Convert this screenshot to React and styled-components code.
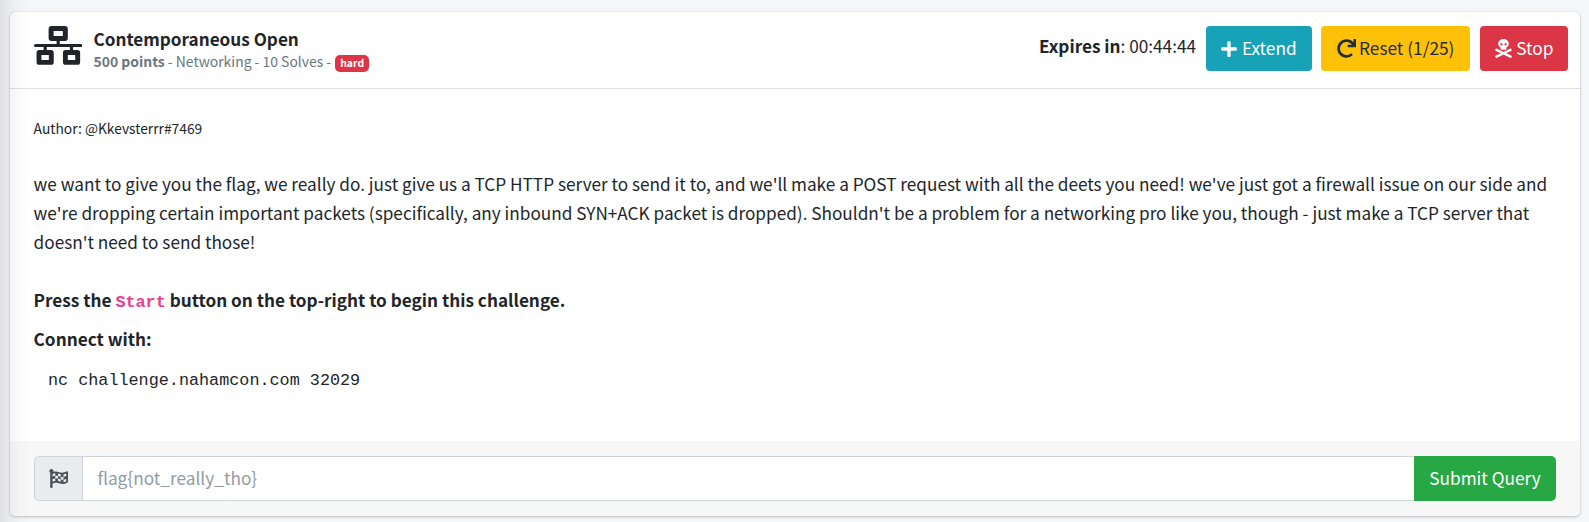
import React from "react";
import styled, { createGlobalStyle } from "styled-components";
import { FaPlus, FaRedo, FaSkullCrossbones, FaFlagCheckered } from "react-icons/fa";

const sans = `"Noto Sans CJK SC", "Noto Sans", sans-serif`;

const GlobalStyle = createGlobalStyle`
  *, *::before, *::after { box-sizing: border-box; }
  body {
    margin: 0;
    background: #f4f6f9;
    color: #212529;
    font: 400 17.2px/28.8px ${sans};
  }
`;

const Page = styled.main`
  position: relative;
  height: 522px;
  padding: 12px 9px 6px 10px;
  overflow: hidden;
`;

const SidebarShadow = styled.div`
  position: absolute;
  inset: 0 auto 0 0;
  width: 32px;
  pointer-events: none;
  background: linear-gradient(to right, rgba(0, 0, 0, 0.09), rgba(0, 0, 0, 0.045) 30%, rgba(0, 0, 0, 0.012) 65%, transparent);
`;

const Card = styled.section`
  display: flex;
  flex-direction: column;
  height: 504px;
  border-radius: 5px;
  background: #fff;
  box-shadow: 0 0 1px rgba(0, 0, 0, 0.25), 0 1px 3px rgba(0, 0, 0, 0.2);
  overflow: hidden;
`;

const Header = styled.header`
  display: flex;
  align-items: flex-start;
  height: 77px;
  padding: 14px 12px 0 23.5px;
  border-bottom: 1px solid #dfdfdf;
`;

const CategoryIcon = styled.svg`
  display: block;
  width: 48px;
  height: 39px;
  flex: none;
`;

const Heading = styled.div`
  flex: 1;
  padding-left: 12px;
`;

const Title = styled.h1`
  margin: -1px 0 0;
  font-size: 17.15px;
  font-weight: 700;
  line-height: 27px;
`;

const Meta = styled.div`
  display: flex;
  align-items: flex-start;
  color: #6c757d;
  font-size: 13.93px;
  line-height: 18px;
  white-space: pre;
`;

const Badge = styled.span`
  margin: 3px 0 0 4px;
  padding: 0 5px;
  border-radius: 5px;
  background: #dc3545;
  color: #fff;
  font-size: 10.4px;
  font-weight: 700;
  line-height: 17px;
`;

const BadgeText = styled.span`
  display: block;
  margin-top: -1px;
  padding-bottom: 1px;
`;

const Timer = styled.div`
  margin-right: 10px;
  line-height: 40px;
`;

const Button = styled.button`
  display: flex;
  align-items: center;
  justify-content: center;
  gap: 3.5px;
  width: ${(p) => p.$width}px;
  height: 45px;
  margin-left: ${(p) => p.$gap || 0}px;
  padding: 0 ${(p) => p.$shift || 0}px 0 0;
  border: 0;
  border-radius: ${(p) => p.$radius || "4px"};
  background: ${(p) => p.$bg};
  color: ${(p) => p.$color || "#fff"};
  font: 400 17.25px/28px ${sans};
  white-space: nowrap;
`;

const Label = styled.span`
  padding-bottom: 2px;
`;

const Body = styled.div`
  flex: 1;
  padding: 0 23.6px;
`;

const Author = styled.p`
  margin: 27px 0 0;
  font-size: 13.8px;
  line-height: 24px;
`;

const Description = styled.p`
  margin: 29px -10px 0 0;
  font-size: 17.21px;
  line-height: 29px;
  white-space: nowrap;
`;

const Strong = styled.p`
  margin: ${(p) => p.$top}px 0 0;
  font-weight: 700;
  line-height: 29px;
`;

const StartCode = styled.code`
  color: #e83e8c;
  font: 700 16.8px/1 "Liberation Mono", monospace;
`;

const Command = styled.pre`
  margin: 15px 0 0;
  padding-left: 14.4px;
  font: 16.8px/25px "Liberation Mono", monospace;
`;

const Footer = styled.footer`
  display: flex;
  height: 75px;
  padding: 15px 24px;
  background: #f7f7f7;
`;

const Prepend = styled.span`
  display: flex;
  align-items: center;
  justify-content: center;
  width: 48px;
  height: 45px;
  border: 1px solid #ced4da;
  border-right: 0;
  border-radius: 5px 0 0 5px;
  background: #e9ecef;
  color: #495057;
`;

const FlagInput = styled.input`
  flex: 1;
  min-width: 0;
  height: 45px;
  padding: 0 14.4px 2px;
  border: 1px solid #ced4da;
  border-right: 0;
  border-radius: 0;
  background: #fff;
  font: 400 17.25px/28px ${sans};
  &::placeholder { color: #939ba2; opacity: 1; }
`;

function NetworkIcon() {
  return (
    <CategoryIcon viewBox="0 0 48 39" fill="none" stroke="currentColor">
      <rect x="17.1" y="2.5" width="14.2" height="10" rx="0.4" strokeWidth="5" />
      <rect x="5" y="26.5" width="12.3" height="9.9" rx="0.4" strokeWidth="4.9" />
      <rect x="31.4" y="26.5" width="12.3" height="9.9" rx="0.4" strokeWidth="4.9" />
      <path d="M1.5 19.5H46.7" strokeWidth="3" strokeLinecap="round" />
      <path d="M24.2 14V19M11.2 20V25M37.5 20V25" strokeWidth="3.2" />
    </CategoryIcon>
  );
}

export default function App() {
  return (
    <>
      <GlobalStyle />
      <Page>
        <Card>
          <Header>
            <NetworkIcon />
            <Heading>
              <Title>Contemporaneous Open</Title>
              <Meta>
                <span><b>500 points</b> - Networking - 10 Solves -</span>
                <Badge><BadgeText>hard</BadgeText></Badge>
              </Meta>
            </Heading>
            <Timer><b>Expires in</b>: 00:44:44</Timer>
            <Button $width={106} $shift={1} $bg="#17a2b8"><FaPlus size={18} /><Label>Extend</Label></Button>
            <Button $width={149} $gap={9} $bg="#ffc107" $color="#1f2d3d"><FaRedo size={19} /><Label>Reset (1/25)</Label></Button>
            <Button $width={88} $gap={10} $shift={1} $bg="#dc3545"><FaSkullCrossbones size={19} /><Label>Stop</Label></Button>
          </Header>
          <Body>
            <Author>Author: @Kkevsterrr#7469</Author>
            <Description>
              we want to give you the flag, we really do. just give us a TCP HTTP server to send it to, and we'll make a POST request with all the deets you need! we've just got a firewall issue on our side and<br />
              we're dropping certain important packets (specifically, any inbound SYN+ACK packet is dropped). Shouldn't be a problem for a networking pro like you, though - just make a TCP server that<br />
              doesn't need to send those!
            </Description>
            <Strong $top={29}>Press the <StartCode>Start</StartCode> button on the top-right to begin this challenge.</Strong>
            <Strong $top={10}>Connect with:</Strong>
            <Command>nc challenge.nahamcon.com 32029</Command>
          </Body>
          <Footer>
            <Prepend><FaFlagCheckered size={19} /></Prepend>
            <FlagInput placeholder="flag{not_really_tho}" />
            <Button $width={142} $bg="#28a745" $radius="0 5px 5px 0"><Label>Submit Query</Label></Button>
          </Footer>
        </Card>
        <SidebarShadow />
      </Page>
    </>
  );
}
